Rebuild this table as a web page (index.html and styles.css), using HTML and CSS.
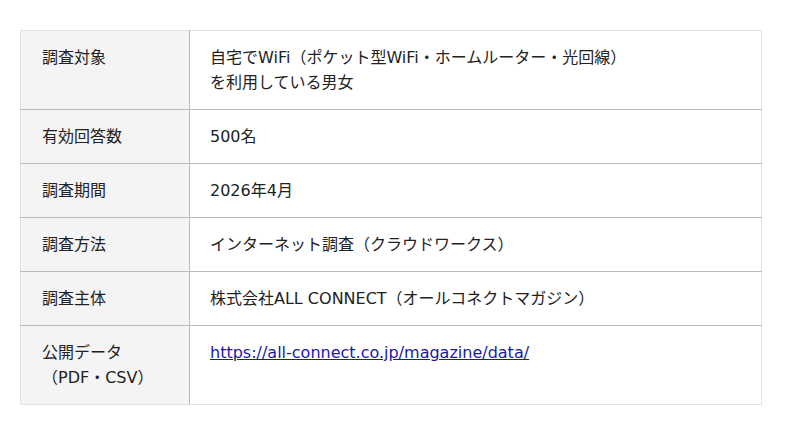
FILE: index.html
```html
<!DOCTYPE html>
<html lang="ja">
<head>
<meta charset="utf-8">
<link rel="stylesheet" href="styles.css">
</head>
<body>
<div class="wrap">
<table class="info">
<tr><th>調査対象</th><td>自宅でWiFi（ポケット型WiFi・ホームルーター・光回線）<br>を利用している男女</td></tr>
<tr><th>有効回答数</th><td>500名</td></tr>
<tr><th>調査期間</th><td>2026年4月</td></tr>
<tr><th>調査方法</th><td>インターネット調査（クラウドワークス）</td></tr>
<tr><th>調査主体</th><td>株式会社ALL CONNECT（オールコネクトマガジン）</td></tr>
<tr><th>公開データ<br>（PDF・CSV）</th><td><a href="#">https://all-connect.co.jp/magazine/data/</a></td></tr>
</table>
</div>
</body>
</html>
```
FILE: styles.css
```css
html, body { margin: 0; padding: 0; background: #fff; }
body { font-family: "DejaVu Sans", "Noto Sans CJK JP", sans-serif; color: #222; font-size: 16px; }
.wrap { padding: 30px 38px 30px 20px; }
.info { width: 742px; border-collapse: collapse; border: 1px solid #e2e2e2; }
.info th, .info td { text-align: left; vertical-align: top; font-weight: normal; line-height: 25px; padding: 14px 20px; border-top: 1px solid #bbb; }
.info tr:first-child th, .info tr:first-child td { border-top: 1px solid #e2e2e2; }
.info th { width: 127px; background: #f4f4f4; padding-left: 21px; border-right: 1px solid #bbb; }
.info a { color: #1a1aa0; }
```
